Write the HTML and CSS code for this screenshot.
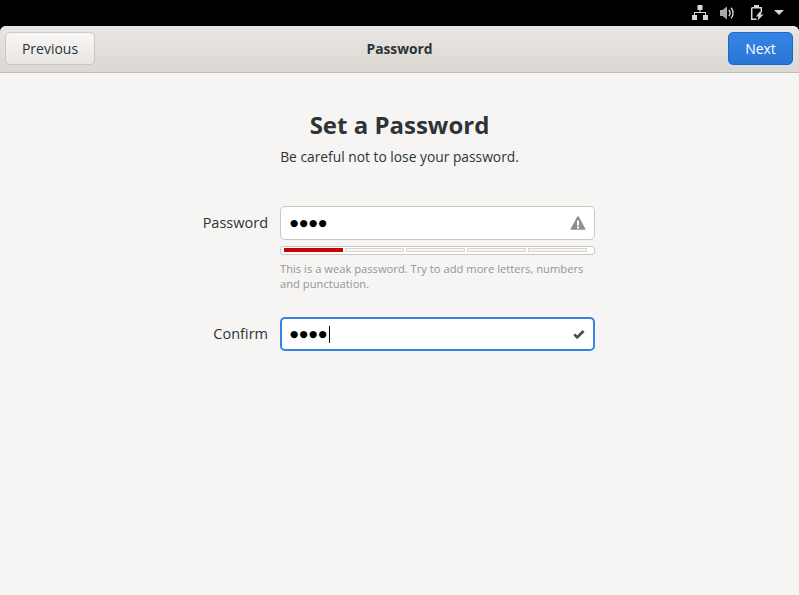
FILE: index.html
```html
<!DOCTYPE html>
<html lang="en">
<head>
  <meta charset="utf-8" />
  <title>Password</title>
  <link rel="stylesheet" href="styles.css">
</head>
<body>
<div class="topbar">
  <svg class="tray-icon" width="16" height="16" viewBox="0 0 16 16"><path fill="#d8d8d8" d="M5.500 0h5v5H8.500v2H14v3h2v5h-5v-5h2V8H3v2h2v5H0v-5h2V7h5.500V5h-2z"/></svg>
  <svg class="tray-icon" width="16" height="16" viewBox="0 0 16 16"><path fill="#a8a8a8" d="M1 5h2.500L8 1.500v13L3.500 11H1z"/><path fill="none" stroke="#e4e4e4" stroke-width="1.300" d="M9.800 5a4 4 0 0 1 0 6M12 2.800a7.500 7.500 0 0 1 0 10.400"/></svg>
  <svg class="tray-icon tray-battery" width="16" height="16" viewBox="0 0 16 16"><path fill="none" stroke="#d8d8d8" stroke-width="1.500" d="M1.700 2.700h9.600v4.300M6.500 14.300H1.700V2.700"/><rect x="4" y="0" width="5" height="2" fill="#d8d8d8"/><path fill="#d8d8d8" d="M9.500 7L6 11.500h2.500L7.500 15.500l6-6h-3L12 7z"/></svg>
  <span class="tray-arrow"></span>
</div>
<div class="window">
  <header class="headerbar">
    <button class="btn">Previous</button>
    <span class="headerbar-title">Password</span>
    <button class="btn btn-next">Next</button>
  </header>
  <main class="page">
    <h1>Set a Password</h1>
    <p class="subtitle">Be careful not to lose your password.</p>
    <div class="form">
      <label class="form-label">Password</label>
      <div class="entry">
        <span class="dots">●●●●</span>
        <svg width="16" height="16" viewBox="0 0 16 16"><path fill="#8e8e8c" fill-rule="evenodd" d="M8 1.200c.3 0 .5.100.7.400l6.600 12.100c.3.500 0 1-.6 1H1.300c-.6 0-.9-.5-.6-1L7.300 1.600c.2-.3.400-.4.700-.4zM7 5.500v5h2v-5zM7 11.500v2h2v-2z"/></svg>
      </div>
      <div class="level">
        <span class="level-block filled"></span>
        <span class="level-block"></span>
        <span class="level-block"></span>
        <span class="level-block"></span>
        <span class="level-block"></span>
      </div>
      <p class="hint">This is a weak password. Try to add more letters, numbers and punctuation.</p>
      <label class="form-label confirm-label">Confirm</label>
      <div class="entry entry-focus confirm-entry">
        <span class="dots">●●●●</span><span class="caret"></span>
        <svg class="check-icon" width="12" height="12" viewBox="0 0 12 12"><path fill="none" stroke="#4d4f4f" stroke-width="2.600" d="M1.200 6.300l3 3L10.600 3"/></svg>
      </div>
    </div>
  </main>
</div>
</body>
</html>
```

FILE: styles.css
```css
* { margin: 0; padding: 0; box-sizing: border-box; }
html, body { height: 100%; overflow: hidden; }
body { background: #000; font-family: "Open Sans", "Noto Sans", sans-serif; color: #2e3436; display: flex; flex-direction: column; }

.topbar { height: 26px; flex: none; display: flex; align-items: center; justify-content: flex-end; padding-right: 15px; padding-bottom: 1px; gap: 11px; }
.tray-icon { display: block; }
.tray-battery { margin-left: 4px; }
.tray-arrow { width: 0; height: 0; border: 5px solid transparent; border-top: 5px solid #d8d8d8; border-bottom: 0; margin-left: -3px; }

.window { flex: 1; background: #f6f5f4; border-radius: 6px 6px 0 0; overflow: hidden; display: flex; flex-direction: column; }
.headerbar { height: 47px; flex: none; display: flex; align-items: center; justify-content: space-between; padding: 0 6px 1px 5px; background: linear-gradient(#e8e5e2, #dcd9d5); border-bottom: 1px solid #c0bbb5; }
.headerbar-title { font-size: 13.800px; font-weight: 700; position: absolute; left: 0; right: 0; text-align: center; pointer-events: none; }
.btn { width: 90px; height: 33px; font: inherit; font-size: 14px; color: #2e3436; background: linear-gradient(#f8f7f6, #e9e6e3); border: 1px solid #cdc7c2; border-radius: 5px; }
.btn-next { width: 65px; color: #fff; background: linear-gradient(#3584e4, #2a76d6); border-color: #1b6acb; }

.page { flex: 1; display: flex; flex-direction: column; align-items: center; padding-top: 35px; }
h1 { font-size: 24px; line-height: 34px; font-weight: 700; }
.subtitle { font-size: 13.800px; line-height: 20px; margin-top: 5px; }

.form { display: grid; grid-template-columns: 66px 315px; column-gap: 12px; margin-top: 39px; margin-right: 2px; }
.form-label { font-size: 14.500px; display: flex; align-items: center; justify-content: flex-end; height: 34px; padding-bottom: 2px; }
.entry { height: 34px; background: #fff; border: 1px solid #cdc7c2; border-radius: 5px; display: flex; align-items: center; padding: 0 8px; }
.entry svg { margin-left: auto; }
.entry .check-icon { margin-right: 1px; }
.dots { font-family: "DejaVu Sans", sans-serif; font-size: 9.500px; letter-spacing: 1.200px; color: #000; padding-bottom: 2px; margin-left: 1px; }
.caret { width: 1px; height: 17px; background: #000; margin-left: 1px; }
.level { grid-column: 2; height: 9px; margin-top: 6px; border: 1px solid #cdc7c2; border-radius: 3px; background: #fff; display: flex; gap: 2px; padding: 1px 7px 2px 3px; }
.level-block { flex: 1; border: 1px solid #d8d5d2; background: #f6f5f4; }
.level-block.filled { background: #cc0000; border-color: #cc0000; }
.hint { grid-column: 2; font-size: 11.200px; line-height: 15px; color: #929595; margin-top: 6px; }
.confirm-label, .confirm-entry { margin-top: 26px; }
.entry-focus { border: 2px solid #3584e4; padding: 0 7px; }
```
